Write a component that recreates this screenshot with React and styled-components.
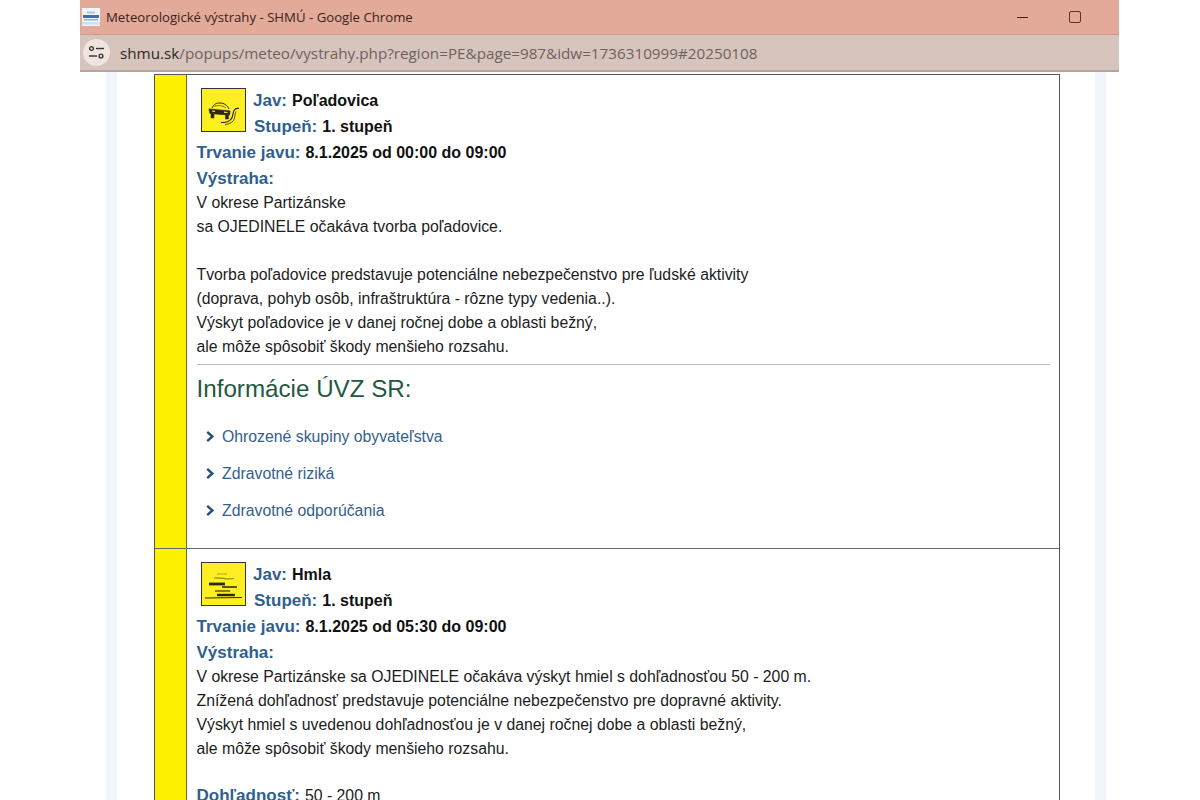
import React from "react";
import styled, { createGlobalStyle } from "styled-components";

const Global = createGlobalStyle`
  html, body { margin: 0; padding: 0; background: #fff; height: 800px; overflow: hidden; }
  body { font-family: "Liberation Sans", Arial, sans-serif; }
`;
const Page = styled.div`
  width: 1039px; height: 800px; margin-left: 80px; display: flex; flex-direction: column; overflow: hidden;
`;
const TitleBar = styled.header`
  flex: 0 0 34px; background: #e3aa9a; border-bottom: 1px solid #cf9a8d; display: flex; align-items: center; padding: 0 38px 0 2px;
`;
const Favicon = styled.svg`width: 18px; height: 18px; margin-right: 6px; flex: none;`;
const WindowTitle = styled.div`
  flex: 1; font: 13.2px "Open Sans", sans-serif; color: #3a2320;
`;
const WinControls = styled.div`display: flex; align-items: center; gap: 41px;`;
const Minimize = styled.span`display: block; width: 11px; height: 1px; background: #40201c;`;
const Maximize = styled.span`display: block; width: 10px; height: 10px; border: 1px solid #5a332e; border-radius: 2px;`;
const UrlBar = styled.div`
  flex: 0 0 37px; box-sizing: border-box; background: #d7c4bd; border-bottom: 2px solid #b5a5a0; display: flex; align-items: center; padding-left: 3px; gap: 10px;
`;
const SiteButton = styled.div`
  width: 27px; height: 27px; border-radius: 50%; background: #efe4df; display: flex; align-items: center; justify-content: center;
`;
const Url = styled.div`
  font: 15.24px "Open Sans", sans-serif; color: #6d625f; white-space: nowrap;
  b { font-weight: 400; color: #2e2826; }
`;
const Sheet = styled.main`
  flex: 1; margin-left: 26px; border-left: 11px solid #f1f6fd; border-right: 11px solid #f1f6fd; background: #fff; padding: 2px 36px 0 37px; width: 905px; overflow: hidden;
`;
const Table = styled.div`
  border: 1px solid #555; border-bottom: none; width: 906px; box-sizing: border-box;
`;
const Row = styled.section`
  display: flex; height: ${p => p.$h}px; border-bottom: ${p => (p.$last ? "none" : "1px solid #666")};
`;
const Level = styled.div`
  flex: 0 0 31px; background: #fff200; border-right: 1px solid #6f6a20;
`;
const Body = styled.div`
  flex: 1; padding: 0 9px 0 9.5px; font-size: 15.8px; line-height: 24px; color: #1c1c1c; min-width: 0;
`;
const Head = styled.div`display: flex; padding: 13px 0 0 4.5px; height: 52px;`;
const IconBox = styled.div`
  width: 45px; height: 44px; border: 1px solid #333; background: #ffee22; flex: none; box-sizing: border-box; overflow: hidden;
`;
const HeadLines = styled.div`padding-left: 7px;`;
const Field = styled.div`
  line-height: ${p => p.$lh || 25.5}px; font-size: 16px; font-weight: 700; color: #111; padding-left: ${p => p.$i || 0}px; white-space: nowrap;
`;
const Label = styled.span`color: #2f5f8f; font-size: 17px; margin-right: 5px; font-weight: 700;`;
const Text = styled.div`white-space: nowrap;`;
const Spacer = styled.div`height: ${p => p.$h || 24}px;`;
const Rule = styled.hr`
  border: 0; border-top: 1px solid #bdbdbd; margin: 5px 0 0;
`;
const Heading = styled.h2`
  margin: 8px 0 0; font-size: 24.2px; font-weight: 400; line-height: 32px; color: #24583f;
`;
const Links = styled.ul`list-style: none; margin: 13px 0 0; padding: 0 0 0 8.5px;`;
const LinkItem = styled.li`
  display: flex; align-items: center; height: 37.2px; color: #35608c; gap: 7px; font-size: 15.8px;
`;

const Arrow = () => (
  <svg width="10" height="13" viewBox="0 0 10 13" fill="none">
    <path d="M2.2 1.8 L7.4 6.5 L2.2 11.2" stroke="#234f7a" strokeWidth="2.4" />
  </svg>
);

const IceIcon = () => (
  <svg width="43" height="42" viewBox="0 0 43 42" fill="none" stroke="#2b2615">
    <path d="M10 19 C12 15 14 14 18 14 C22 14 25 16 27 20" strokeWidth="1" />
    <path d="M12 17.5 C15 16 20 16 24 19" stroke="#7a7420" strokeWidth="1" />
    <path d="M7 20 L28 22 L27.5 26 L8 24.5 Z" fill="#2b2615" strokeWidth="0.8" />
    <path d="M10 22 L13 22.3 M22 23.2 L25.5 23.5" stroke="#ffee22" strokeWidth="1.2" />
    <rect x="9" y="25" width="3" height="4" fill="#2b2615" strokeWidth="0.5" />
    <rect x="23.5" y="26" width="3" height="4" fill="#2b2615" strokeWidth="0.5" />
    <path d="M37 19.5 C33 19 31.5 21 31 25 C30.5 30 28 33 22 33.5 L19 33.5" strokeWidth="1.2" />
    <path d="M34 22.5 C33 24 33 27 32.5 29 C31.5 33 28 35 23 35.5" strokeWidth="0.8" />
  </svg>
);

const FogIcon = () => (
  <svg width="43" height="42" viewBox="0 0 43 42" fill="none" stroke="#2b2810">
    <path d="M15 11 L25 11" stroke="#a8a230" strokeWidth="1" />
    <path d="M12 15 C18 14 25 17 32 15.5" stroke="#8f8a30" strokeWidth="1.2" />
    <path d="M7 21 L23 21" strokeWidth="2.8" />
    <path d="M20 24 L35 24" stroke="#4a4618" strokeWidth="1.8" />
    <path d="M13 28 L28 28" stroke="#6a6522" strokeWidth="1.6" />
    <path d="M15 32 L33 32" strokeWidth="2.4" />
    <path d="M3 35 L40 34.5" strokeWidth="1" />
  </svg>
);

const Sliders = () => (
  <svg width="17" height="15" viewBox="0 0 17 15" fill="none" stroke="#3a3230" strokeWidth="1.4">
    <circle cx="3.5" cy="3.5" r="1.9" />
    <path d="M8 3.5 H16" />
    <circle cx="13" cy="11" r="1.9" />
    <path d="M1 11 H9" />
  </svg>
);

const Logo = () => (
  <Favicon viewBox="0 0 18 18">
    <rect width="18" height="18" fill="#f2f5f8" />
    <rect x="1" y="7" width="16" height="3" fill="#3f6fb0" />
    <rect x="2" y="11" width="14" height="1.5" fill="#8fb3dc" />
    <rect x="5" y="3.5" width="8" height="2" fill="#a9c6e4" />
    <rect x="0" y="14" width="18" height="2.5" fill="#cfe0f0" />
  </Favicon>
);

const urlPath = "/popups/meteo/vystrahy.php?region=PE&page=987&idw=1736310999#20250108";

export default function App() {
  return (
    <Page>
      <Global />
      <TitleBar>
        <Logo />
        <WindowTitle>Meteorologické výstrahy - SHMÚ - Google Chrome</WindowTitle>
        <WinControls><Minimize /><Maximize /></WinControls>
      </TitleBar>
      <UrlBar>
        <SiteButton><Sliders /></SiteButton>
        <Url><b>shmu.sk</b>{urlPath}</Url>
      </UrlBar>
      <Sheet>
        <Table>
          <Row $h={473}>
            <Level />
            <Body>
              <Head>
                <IconBox><IceIcon /></IconBox>
                <HeadLines>
                  <Field $lh={26}><Label>Jav:</Label>Poľadovica</Field>
                  <Field $lh={26} $i={1}><Label>Stupeň:</Label>1. stupeň</Field>
                </HeadLines>
              </Head>
              <Field><Label>Trvanie javu:</Label>8.1.2025 od 00:00 do 09:00</Field>
              <Field><Label>Výstraha:</Label></Field>
              <Text>V okrese Partizánske</Text>
              <Text>sa OJEDINELE očakáva tvorba poľadovice.</Text>
              <Spacer />
              <Text>Tvorba poľadovice predstavuje potenciálne nebezpečenstvo pre ľudské aktivity</Text>
              <Text>(doprava, pohyb osôb, infraštruktúra - rôzne typy vedenia..).</Text>
              <Text>Výskyt poľadovice je v danej ročnej dobe a oblasti bežný,</Text>
              <Text>ale môže spôsobiť škody menšieho rozsahu.</Text>
              <Rule />
              <Heading>Informácie ÚVZ SR:</Heading>
              <Links>
                <LinkItem><Arrow />Ohrozené skupiny obyvateľstva</LinkItem>
                <LinkItem><Arrow />Zdravotné riziká</LinkItem>
                <LinkItem><Arrow />Zdravotné odporúčania</LinkItem>
              </Links>
            </Body>
          </Row>
          <Row $h={260} $last>
            <Level />
            <Body>
              <Head>
                <IconBox><FogIcon /></IconBox>
                <HeadLines>
                  <Field $lh={26}><Label>Jav:</Label>Hmla</Field>
                  <Field $lh={26} $i={1}><Label>Stupeň:</Label>1. stupeň</Field>
                </HeadLines>
              </Head>
              <Field><Label>Trvanie javu:</Label>8.1.2025 od 05:30 do 09:00</Field>
              <Field><Label>Výstraha:</Label></Field>
              <Text>V okrese Partizánske sa OJEDINELE očakáva výskyt hmiel s dohľadnosťou 50 - 200 m.</Text>
              <Text>Znížená dohľadnosť predstavuje potenciálne nebezpečenstvo pre dopravné aktivity.</Text>
              <Text>Výskyt hmiel s uvedenou dohľadnosťou je v danej ročnej dobe a oblasti bežný,</Text>
              <Text>ale môže spôsobiť škody menšieho rozsahu.</Text>
              <Spacer $h={23} />
              <Text><Label>Dohľadnosť:</Label>50 - 200 m</Text>
            </Body>
          </Row>
        </Table>
      </Sheet>
    </Page>
  );
}
